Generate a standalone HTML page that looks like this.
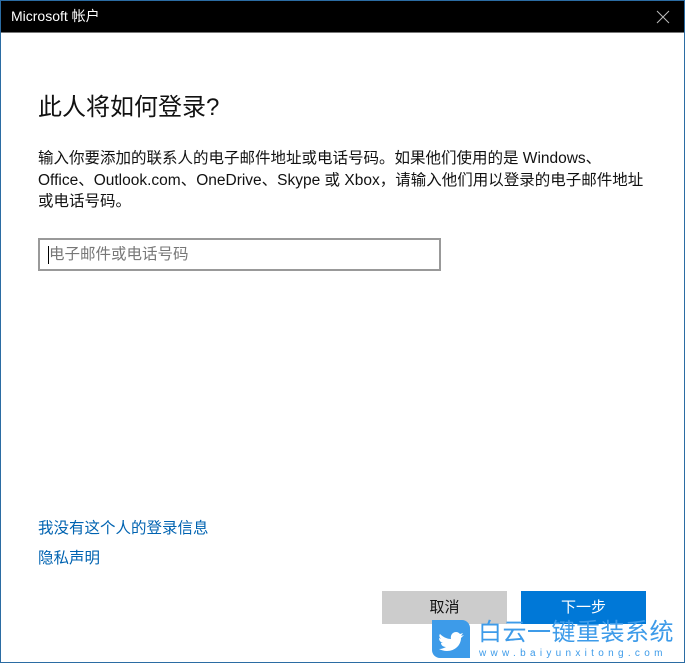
<!DOCTYPE html>
<html><head><meta charset="utf-8"><style>
*{margin:0;padding:0;box-sizing:border-box}
body{width:685px;height:663px;overflow:hidden;background:#fff;font-family:"Liberation Sans","Noto Sans CJK SC",sans-serif;position:relative}
.win{position:absolute;left:0;top:0;width:685px;height:663px;border:1px solid #2b6ca3}
.title{position:absolute;left:1px;top:1px;width:683px;height:32px;background:#000;border-bottom:1px solid #777;color:#fff;font-size:14px;line-height:31px;padding-left:10px}
.x{position:absolute;right:14px;top:9px}
h1{position:absolute;left:38px;top:92px;font-size:24px;font-weight:normal;color:#111;line-height:32px}
.p{position:absolute;left:38px;top:148px;white-space:nowrap;font-size:15.5px;line-height:21.5px;color:#111}
.inp{position:absolute;left:38px;top:238px;width:403px;height:33px;border:2px solid #999;font-size:15.5px;color:#777;line-height:29px;padding-left:9px}
.inp:before{content:"";position:absolute;left:8px;top:6px;width:1px;height:18px;background:#000}
.lnk{position:absolute;left:38px;font-size:15.5px;color:#0063b1}
.btn{position:absolute;top:591px;width:125px;height:33px;font-size:15px;text-align:center;line-height:33px}
.wm{position:absolute;left:432px;top:620px;width:38px;height:38px;background:#3d9be9;border-radius:0 8px 0 8px}
.wt{position:absolute;left:478px;top:619px;font-size:24px;color:#3d9be9;letter-spacing:0.5px;line-height:28px;white-space:nowrap}
.wu{position:absolute;left:479px;top:648px;font-size:10px;color:#3d9be9;letter-spacing:4.3px;line-height:12px;white-space:nowrap}
</style></head><body>
<div class="win"></div>
<div class="title">Microsoft 帐户<svg class="x" width="14" height="14" viewBox="0 0 14 14"><path d="M1 1L13 13M13 1L1 13" stroke="#bbb" stroke-width="1"/></svg></div>
<h1>此人将如何登录?</h1>
<div class="p">输入你要添加的联系人的电子邮件地址或电话号码。如果他们使用的是 Windows、<br>Office、Outlook.com、OneDrive、Skype 或 Xbox，请输入他们用以登录的电子邮件地址<br>或电话号码。</div>
<div class="inp">电子邮件或电话号码</div>
<div class="lnk" style="top:516px">我没有这个人的登录信息</div>
<div class="lnk" style="top:546px">隐私声明</div>
<div class="btn" style="left:382px;background:#ccc;color:#111">取消</div>
<div class="btn" style="left:521px;background:#0078d7;color:#fff">下一步</div>
<div class="wm"><svg width="38" height="38" viewBox="0 0 38 38"><path d="M8 14c3 3 7 5 11 5-1-4 2-7 5-7 2 0 3 1 4 2l3-1-2 3 3-1-3 3c0 7-6 13-14 13-3 0-6-1-8-2 3 0 5-1 7-2-3 0-5-2-5-4h2c-3-1-4-3-4-5l2 1c-2-2-2-4-1-5z" fill="#fff"/></svg></div>
<div class="wt">白云一键重装系统</div>
<div class="wu">www.baiyunxitong.com</div>
</body></html>
